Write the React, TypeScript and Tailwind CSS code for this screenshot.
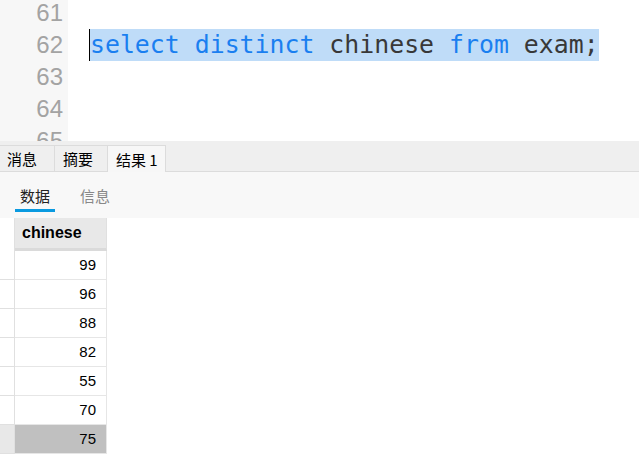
import React from "react";

const mono = { fontFamily: '"DejaVu Sans Mono", monospace' };

export default function App() {
  const lines = [61, 62, 63, 64, 65];
  const rows = ["99", "96", "88", "82", "55", "70", "75"];
  return (
    <div className="w-[639px] h-[456px] overflow-hidden bg-white flex flex-col font-['Liberation_Sans','Noto_Sans_CJK_SC',sans-serif]">
      {/* Editor */}
      <div className="h-[141px] shrink-0 flex overflow-hidden bg-white">
        <div className="w-[68px] shrink-0 bg-[#f7f7f7] flex flex-col -mt-[3px]">
          {lines.map((n) => (
            <div key={n} className="h-[32px] leading-[32px] text-right pr-[5px] text-[24px] text-[#a3a3a3] font-['Liberation_Sans',sans-serif]">
              {n}
            </div>
          ))}
        </div>
        <div className="flex-1 flex flex-col -mt-[3px]">
          <div className="h-[32px]" />
          <div className="h-[32px] flex items-stretch pl-[21px]">
            <div className="w-[1px] bg-black" />
            <div
              className="bg-[#bfdcf8] h-[32px] leading-[32px] text-[24.85px] whitespace-pre text-[#383838]"
              style={mono}
            >
              <span className="text-[#1a7ff0]">select</span> <span className="text-[#1a7ff0]">distinct</span> chinese <span className="text-[#1a7ff0]">from</span> exam;
            </div>
          </div>
        </div>
      </div>

      {/* Tabs bar */}
      <div className="h-[31px] shrink-0 bg-[#efefef] border-b border-[#dcdcdc] flex items-end text-[15px] text-black font-['Noto_Sans_CJK_SC',sans-serif]">
        <div className="h-[26px] w-[55px] border-t border-r border-[#dcdcdc] flex items-center pl-[7px] leading-none">消息</div>
        <div className="h-[26px] w-[53px] border-t border-r border-[#dcdcdc] flex items-center pl-[8px] leading-none">摘要</div>
        <div className="h-[27px] w-[58px] border-t border-r border-[#dcdcdc] bg-[#f7f7f7] -mb-px flex items-center pl-[8px] leading-none">结果 1</div>
      </div>

      {/* Sub tabs */}
      <div className="h-[46px] shrink-0 bg-[#f8f8f8] flex items-end pl-[15px] text-[15px] font-['Noto_Sans_CJK_SC',sans-serif]">
        <div className="w-[40px] flex flex-col items-center">
          <span className="text-[#222] leading-none">数据</span>
          <div className="mt-[6px] h-[3px] w-[40px] bg-[#0a9ae0]" />
          <div className="h-[6px]" />
        </div>
        <div className="ml-[25px] flex flex-col items-center">
          <span className="text-[#888] leading-none">信息</span>
          <div className="mt-[6px] h-[3px]" />
          <div className="h-[6px]" />
        </div>
      </div>

      {/* Grid */}
      <div className="flex-1 flex flex-col bg-white">
        <div className="h-[33px] flex shrink-0">
          <div className="w-[15px] bg-white border-r border-[#e0e0e0]" />
          <div className="w-[92px] bg-[#e8e8e8] border-b-[3px] border-[#dadada] border-r border-r-[#e0e0e0] flex items-center pl-[7px] text-[16px] font-bold text-black">
            chinese
          </div>
        </div>
        {rows.map((v, i) => {
          const sel = i === rows.length - 1;
          return (
            <div key={i} className="h-[29px] flex shrink-0">
              <div className={`w-[15px] border-r border-b border-[#e0e0e0] ${sel ? "bg-[#e8e8e8]" : "bg-white"}`} />
              <div className={`w-[92px] border-r border-b border-[#e6e6e6] flex items-center justify-end pr-[10px] text-[15px] text-black ${sel ? "bg-[#c0c0c0]" : "bg-white"}`}>
                {v}
              </div>
            </div>
          );
        })}
      </div>
    </div>
  );
}
